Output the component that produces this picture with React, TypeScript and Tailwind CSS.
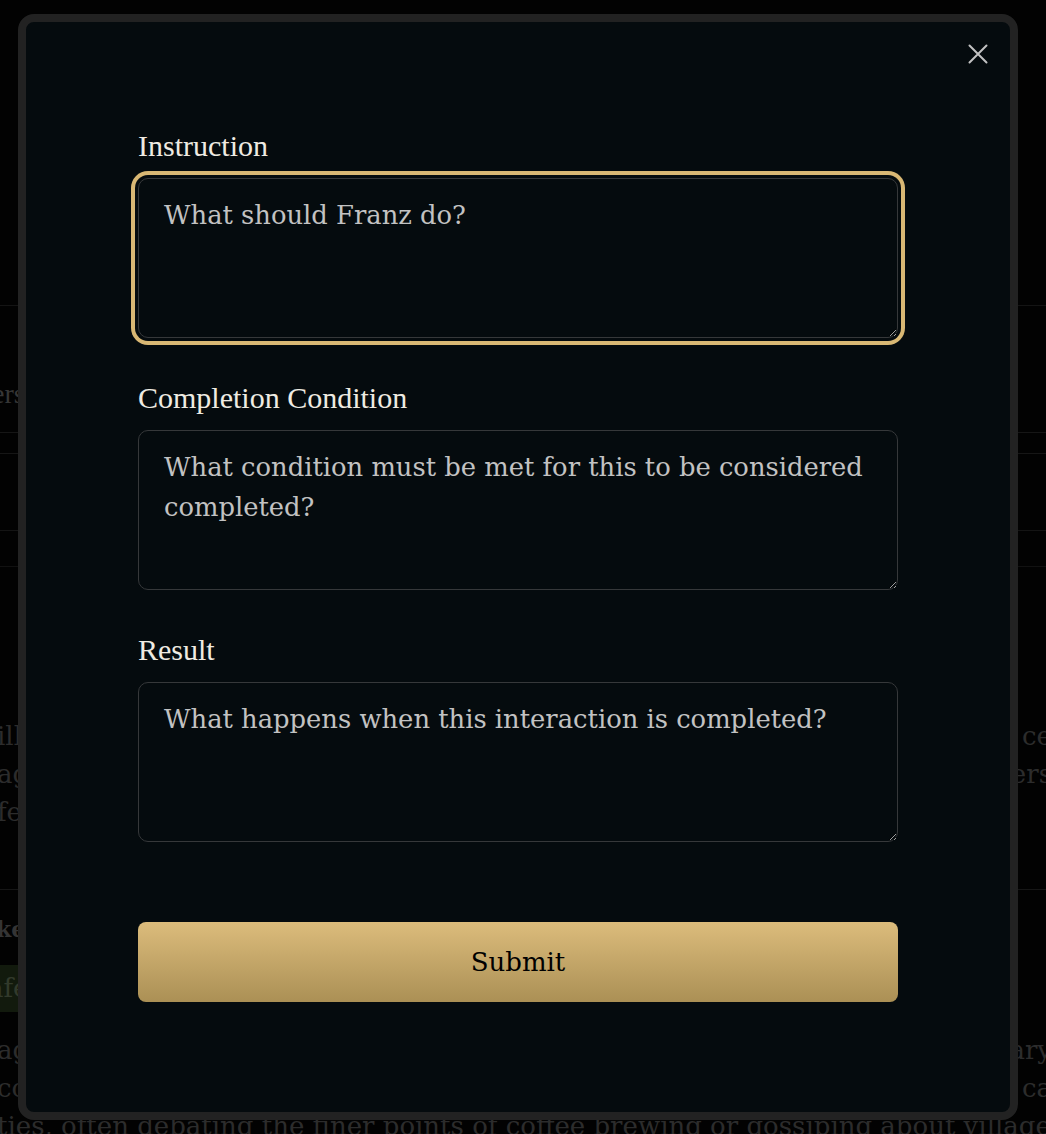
import React from "react";

const slab = { fontFamily: '"DejaVu Serif", serif' };

function Field({ label, placeholder, focused }: { label: string; placeholder: string; focused?: boolean }) {
  return (
    <div className="flex flex-col">
      <label className="mb-[14px] text-[30px] leading-[36px] text-[#efebe2] [font-family:'Liberation_Serif',serif]">
        {label}
      </label>
      <textarea
        placeholder={placeholder}
        className={
          "h-[160px] w-full resize-y rounded-[10px] border border-[#36383a] bg-[#050b0e] px-[25px] py-4 text-[25.8px] leading-[40px] text-[#d0d0d0] outline-none placeholder:text-[#c2c2c2] [font-family:'DejaVu_Serif',serif] " +
          (focused ? "ring-[4px] ring-[#d9b874] ring-offset-[3px] ring-offset-[#050b0e]" : "")
        }
      />
    </div>
  );
}

function BgLine({ left, right, className = "" }: { left: string; right?: string; className?: string }) {
  return (
    <div className={"flex h-[38px] items-center justify-between whitespace-nowrap " + className}>
      <span className="-ml-[3px]">{left}</span>
      {right ? <span className="-mr-[6px]">{right}</span> : null}
    </div>
  );
}

export default function App() {
  return (
    <div className="relative h-[1134px] w-full overflow-hidden bg-[#020202]">
      {/* dimmed page behind the modal */}
      <div className="flex flex-col text-[26px] text-[#2c2c2c]" style={slab}>
        <div className="h-[306px] border-b border-[#141414]" />
        <div className="flex h-[126px] items-end pb-[17px]">
          <span className="-ml-[8px] text-[28px] text-[#363636] [font-family:'Liberation_Serif',serif]">ers</span>
        </div>
        <div className="h-[21px] border-t border-[#161616]" />
        <div className="h-[77px] border-t border-[#161616]" />
        <div className="h-[36px] border-t border-[#141414]" />
        <div className="h-[323px] border-t border-[#111111] pt-[150px]">
          <BgLine left="ill" right="ce" />
          <BgLine left="ag" right="ers" />
          <BgLine left="fe" />
        </div>
        <div className="border-t border-[#161616] pt-[23px]">
          <div className="h-[30px] leading-[30px] font-bold text-[#343434]">
            <span className="-ml-[4px] text-[22px]">ke</span>
          </div>
          <div className="mt-[22px] flex">
            <span className="-ml-[14px] flex h-[47px] items-center bg-[#121a0d] pl-[2px] pr-[8px] text-[#323a2c]">afé</span>
          </div>
          <div className="pt-[19px]">
            <BgLine left="ag" right="ary" />
            <BgLine left="co" right="ca" />
            <BgLine left="ties, often debating the finer points of coffee brewing or gossiping about village d" />
          </div>
        </div>
      </div>

      {/* modal */}
      <div className="absolute left-[18px] top-[14px] h-[1106px] w-[1000px] rounded-[16px] border-8 border-[#222222] bg-[#050b0e]">
        <button className="absolute left-[942px] top-[22px] text-[#c2c2c2]" aria-label="Close">
          <svg width="20" height="20" viewBox="0 0 20 20" fill="none" stroke="currentColor" strokeWidth="2" strokeLinecap="round">
            <path d="M1.5 1.5 L18.5 18.5 M18.5 1.5 L1.5 18.5" />
          </svg>
        </button>
        <div className="flex flex-col gap-[42px] px-[112px] pt-[106px]">
          <Field label="Instruction" placeholder="What should Franz do?" focused />
          <Field
            label="Completion Condition"
            placeholder="What condition must be met for this to be considered completed?"
          />
          <Field label="Result" placeholder="What happens when this interaction is completed?" />
        </div>
        <div className="px-[112px] pt-[80px]">
          <button className="flex h-[80px] w-full items-center justify-center rounded-[8px] bg-gradient-to-b from-[#dcbc7c] to-[#ab9055] text-[26px] text-black [font-family:'DejaVu_Serif',serif]">
            Submit
          </button>
        </div>
      </div>
    </div>
  );
}
